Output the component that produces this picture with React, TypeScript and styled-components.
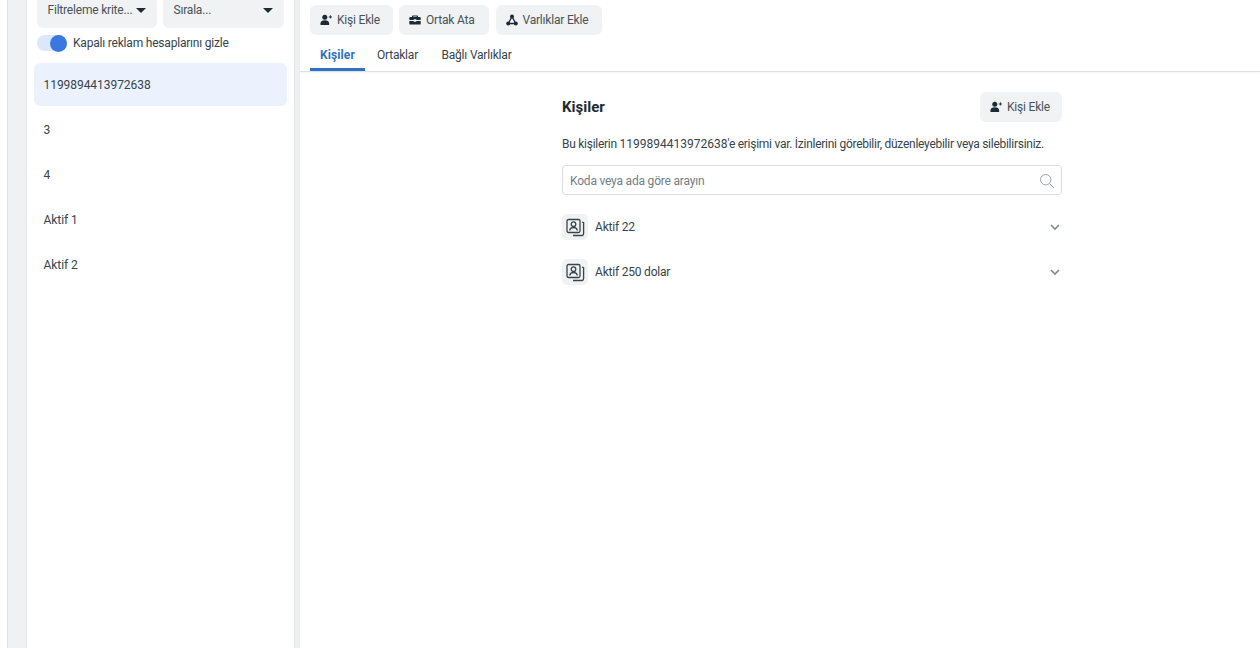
import React from 'react';
import styled, { createGlobalStyle } from 'styled-components';

const GlobalStyle = createGlobalStyle`
  html, body {
    margin: 0;
    padding: 0;
    height: 100%;
    overflow: hidden;
    background: #fff;
  }
  body {
    font-family: Roboto, "Liberation Sans", sans-serif;
    font-size: 12px;
    letter-spacing: -0.2px;
    color: #1c2b33;
  }
`;

const Page = styled.div`
  display: flex;
  height: 656px;
  margin-top: -8px;
  padding-left: 7px;
  overflow: hidden;
`;

const LeftRail = styled.div`
  width: 18px;
  flex: none;
  background: #f0f1f2;
  border-left: 1px solid #dcdee0;
  border-right: 1px solid #e4e6e8;
`;

const Sidebar = styled.aside`
  width: 267px;
  flex: none;
  box-sizing: border-box;
  padding: 0 7px;
  background: #fff;
`;

const FilterRow = styled.div`
  display: flex;
  gap: 6px;
  padding: 0 3px;
`;

const FilterButton = styled.div<{ $width: number }>`
  width: ${(p) => p.$width}px;
  height: 36px;
  box-sizing: border-box;
  padding: 0 11px 0 10.5px;
  display: flex;
  align-items: center;
  justify-content: space-between;
  background: #f1f2f3;
  border-radius: 6px;
  color: #46535a;
  white-space: nowrap;
`;

const Caret = styled.span`
  width: 0;
  height: 0;
  flex: none;
  border-left: 5px solid transparent;
  border-right: 5px solid transparent;
  border-top: 5px solid #1c2b33;
`;

const ToggleRow = styled.div`
  display: flex;
  align-items: center;
  gap: 6px;
  height: 18px;
  margin: 6px 0 0 3px;
  color: #36444c;
`;

const Toggle = styled.span`
  width: 30px;
  height: 16px;
  border-radius: 8px;
  background: #dbe7fa;
  display: flex;
  justify-content: flex-end;
  align-items: center;
`;

const Thumb = styled.span`
  width: 17px;
  height: 17px;
  border-radius: 50%;
  background: #3a78e0;
`;

const AccountList = styled.div`
  display: flex;
  flex-direction: column;
  gap: 2px;
  margin-top: 11px;
`;

const AccountRow = styled.div<{ $active?: boolean }>`
  height: 43px;
  display: flex;
  align-items: center;
  padding-left: 9.5px;
  border-radius: 6px;
  background: ${(p) => (p.$active ? '#ecf2fd' : 'transparent')};
  color: #36444c;
  letter-spacing: -0.05px;
`;

const Divider = styled.div`
  width: 5px;
  flex: none;
  background: #eff0f1;
  border-left: 1px solid #e2e4e6;
`;

const Main = styled.main`
  flex: 1;
  min-width: 0;
  background: #fff;
`;

const TopBar = styled.div`
  border-bottom: 1px solid #dfe1e3;
  box-shadow: 0 1px 2px rgba(0, 0, 0, 0.04);
  padding: 12.5px 0 0 10px;
`;

const Actions = styled.div`
  display: flex;
  gap: 6.5px;
`;

const ActionButton = styled.button<{ $width: number }>`
  width: ${(p) => p.$width}px;
  height: 30px;
  border: none;
  padding: 0 0 0 10px;
  display: flex;
  align-items: center;
  gap: 5px;
  background: #f1f2f3;
  border-radius: 6px;
  font: inherit;
  letter-spacing: inherit;
  color: #46535a;
`;

const Tabs = styled.div`
  display: flex;
  margin-top: 6.5px;
  height: 30px;
`;

const Tab = styled.div<{ $active?: boolean; $width: number }>`
  width: ${(p) => p.$width}px;
  box-sizing: border-box;
  display: flex;
  align-items: center;
  justify-content: center;
  font-weight: ${(p) => (p.$active ? 700 : 400)};
  letter-spacing: ${(p) => (p.$active ? '0.1px' : '-0.2px')};
  color: ${(p) => (p.$active ? '#2f72c4' : '#36444c')};
  border-bottom: 3px solid ${(p) => (p.$active ? '#2f72c4' : 'transparent')};
`;

const Content = styled.section`
  width: 500px;
  margin: 20px 0 0 262px;
`;

const ContentHeader = styled.div`
  display: flex;
  align-items: center;
  justify-content: space-between;
`;

const Title = styled.h2`
  margin: 0;
  font-size: 15px;
  font-weight: 700;
  letter-spacing: 0;
  color: #1c2b33;
`;

const Description = styled.p`
  margin: 14px 0 0;
  line-height: 16px;
  color: #36444c;
  white-space: nowrap;
  letter-spacing: -0.27px;
`;

const AccountNumber = styled.span`
  letter-spacing: 0;
`;

const SearchBox = styled.div`
  height: 30px;
  margin-top: 13px;
  box-sizing: border-box;
  padding: 1px 6px 0 7px;
  display: flex;
  align-items: center;
  justify-content: space-between;
  border: 1px solid #dcdfe2;
  border-radius: 4px;
  color: #737e85;
`;

const GroupList = styled.div`
  display: flex;
  flex-direction: column;
  gap: 19px;
  margin-top: 19px;
`;

const GroupRow = styled.div`
  display: flex;
  align-items: center;
  gap: 7px;
  color: #36444c;
`;

const GroupIcon = styled.span`
  width: 26px;
  height: 26px;
  border-radius: 5px;
  background: #f1f2f3;
  display: flex;
  align-items: center;
  justify-content: center;
`;

const GroupName = styled.span`
  flex: 1;
`;

const Chevron = styled.svg`
  margin-right: 1px;
`;

const PersonAddIcon = () => (
  <svg width="12" height="12" viewBox="0 0 12 12" fill="#1c2b33">
    <circle cx="4.800" cy="3.200" r="2.500" />
    <path d="M.5 11V9.200C.5 7.300 2.200 6.200 4.800 6.200s4.300 1.100 4.300 3V11z" />
    <path d="M8.800 2.500h1.100V1.300h.9v1.200H12v.9h-1.200v1.200h-.9V3.400H8.800z" />
  </svg>
);

const BriefcaseIcon = () => (
  <svg width="12" height="12" viewBox="0 0 12 12" fill="#1c2b33">
    <path d="M4 1.500h4c.6 0 1 .4 1 1V3h1.800c.5 0 .9.4.9.9V6H7.300v-.8H4.700V6H.3V3.900c0-.5.4-.9.9-.9H3v-.5c0-.6.4-1 1-1zM4.200 3h3.600v-.4H4.200z" />
    <path d="M.3 7h4.400v.7h2.600V7h4.400v2.700c0 .5-.4.9-.9.9H1.200c-.5 0-.9-.4-.9-.9z" />
  </svg>
);

const AssetsIcon = () => (
  <svg width="12" height="12" viewBox="0 0 12 12" fill="none" stroke="#1c2b33" strokeWidth="1.300">
    <path d="M6 2.500 2.300 9.500h7.400z" />
    <circle cx="6" cy="2.500" r="2" fill="#1c2b33" stroke="none" />
    <circle cx="2.200" cy="9.500" r="2" fill="#1c2b33" stroke="none" />
    <circle cx="9.800" cy="9.500" r="2" fill="#1c2b33" stroke="none" />
  </svg>
);

const SearchIcon = () => (
  <svg width="16" height="16" viewBox="0 0 16 16" fill="none" stroke="#9aa2a8" strokeWidth="1">
    <circle cx="6.700" cy="6.700" r="5.200" />
    <path d="m10.500 10.500 4.600 4.600" />
  </svg>
);

const PeopleCardIcon = () => (
  <svg width="19" height="19" viewBox="0 0 19 19" fill="none" stroke="#36444c" strokeWidth="1.300">
    <rect x="1" y="1.500" width="13" height="13" rx="1.500" />
    <circle cx="7.500" cy="6.200" r="2.300" />
    <path d="M3.700 12.500c.3-2.100 1.900-3 3.800-3s3.500.9 3.800 3" />
    <path d="M16 4l1.600.6v11c0 1-.6 1.900-1.600 1.900H7" />
  </svg>
);

const ChevronDown = () => (
  <Chevron width="12" height="12" viewBox="0 0 12 12" fill="none" stroke="#80898f" strokeWidth="1.600">
    <path d="m2 4 4 4 4-4" />
  </Chevron>
);

const accounts = ['1199894413972638', '3', '4', 'Aktif 1', 'Aktif 2'];
const groups = ['Aktif 22', 'Aktif 250 dolar'];

const App: React.FC = () => {
  return (
    <>
      <GlobalStyle />
      <Page>
        <LeftRail />
        <Sidebar>
          <FilterRow>
            <FilterButton $width={120}>
              Filtreleme krite...
              <Caret />
            </FilterButton>
            <FilterButton $width={121}>
              Sırala...
              <Caret />
            </FilterButton>
          </FilterRow>
          <ToggleRow>
            <Toggle>
              <Thumb />
            </Toggle>
            Kapalı reklam hesaplarını gizle
          </ToggleRow>
          <AccountList>
            {accounts.map((name, i) => (
              <AccountRow key={name} $active={i === 0}>
                {name}
              </AccountRow>
            ))}
          </AccountList>
        </Sidebar>
        <Divider />
        <Main>
          <TopBar>
            <Actions>
              <ActionButton $width={82.5}>
                <PersonAddIcon />
                Kişi Ekle
              </ActionButton>
              <ActionButton $width={90}>
                <BriefcaseIcon />
                Ortak Ata
              </ActionButton>
              <ActionButton $width={106}>
                <AssetsIcon />
                Varlıklar Ekle
              </ActionButton>
            </Actions>
            <Tabs>
              <Tab $active $width={55}>Kişiler</Tab>
              <Tab $width={65}>Ortaklar</Tab>
              <Tab $width={93}>Bağlı Varlıklar</Tab>
            </Tabs>
          </TopBar>
          <Content>
            <ContentHeader>
              <Title>Kişiler</Title>
              <ActionButton $width={82}>
                <PersonAddIcon />
                Kişi Ekle
              </ActionButton>
            </ContentHeader>
            <Description>
              Bu kişilerin <AccountNumber>1199894413972638</AccountNumber>'e erişimi var. İzinlerini görebilir, düzenleyebilir veya silebilirsiniz.
            </Description>
            <SearchBox>
              Koda veya ada göre arayın
              <SearchIcon />
            </SearchBox>
            <GroupList>
              {groups.map((name) => (
                <GroupRow key={name}>
                  <GroupIcon>
                    <PeopleCardIcon />
                  </GroupIcon>
                  <GroupName>{name}</GroupName>
                  <ChevronDown />
                </GroupRow>
              ))}
            </GroupList>
          </Content>
        </Main>
      </Page>
    </>
  );
};

export default App;
